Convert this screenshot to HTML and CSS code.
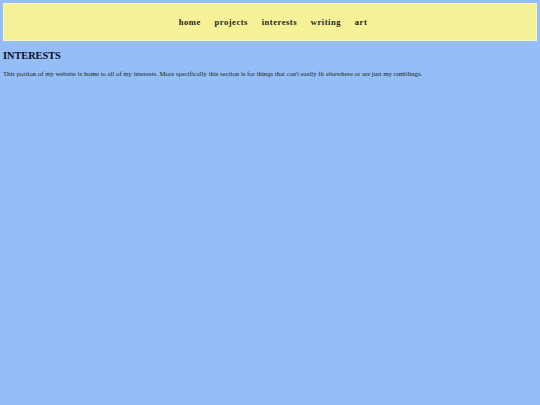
FILE: index.html
```html
<!DOCTYPE html>
<html>
<head>
<meta charset="utf-8">
<link rel="stylesheet" href="styles.css">
</head>
<body>
<header class="topbar">
  <nav class="nav">
    <a href="#">home</a>
    <a href="#">projects</a>
    <a href="#">interests</a>
    <a href="#">writing</a>
    <a href="#">art</a>
  </nav>
</header>
<main class="content">
  <h1 class="title">INTERESTS</h1>
  <p class="intro">This portion of my website is home to all of my interests. More specifically this section is for things that can't easily fit elsewhere or are just my ramblings.</p>
</main>
</body>
</html>
```
FILE: styles.css
```css
html, body {
  margin: 0;
  padding: 0;
  background: #95bef6;
  font-family: "Liberation Serif", "Times New Roman", serif;
  color: #111;
}
body {
  padding: 3px;
}
.topbar {
  background: #f7f297;
  border: 1px solid #f9f6c0;
  height: 36px;
  display: flex;
  align-items: center;
  justify-content: center;
}
.nav {
  display: flex;
  gap: 13.75px;
  padding-left: 6px;
  padding-bottom: 1px;
}
.nav a {
  color: #222;
  text-decoration: none;
  font-weight: bold;
  font-size: 8.6px;
  letter-spacing: 0.5px;
}
.content {
  padding: 0;
}
.title {
  font-size: 10.3px;
  font-weight: bold;
  margin: 9px 0 0 0;
  color: #0a0a1a;
}
.intro {
  font-size: 6.75px;
  margin: 9px 0 0 0;
  color: #222;
}
```
